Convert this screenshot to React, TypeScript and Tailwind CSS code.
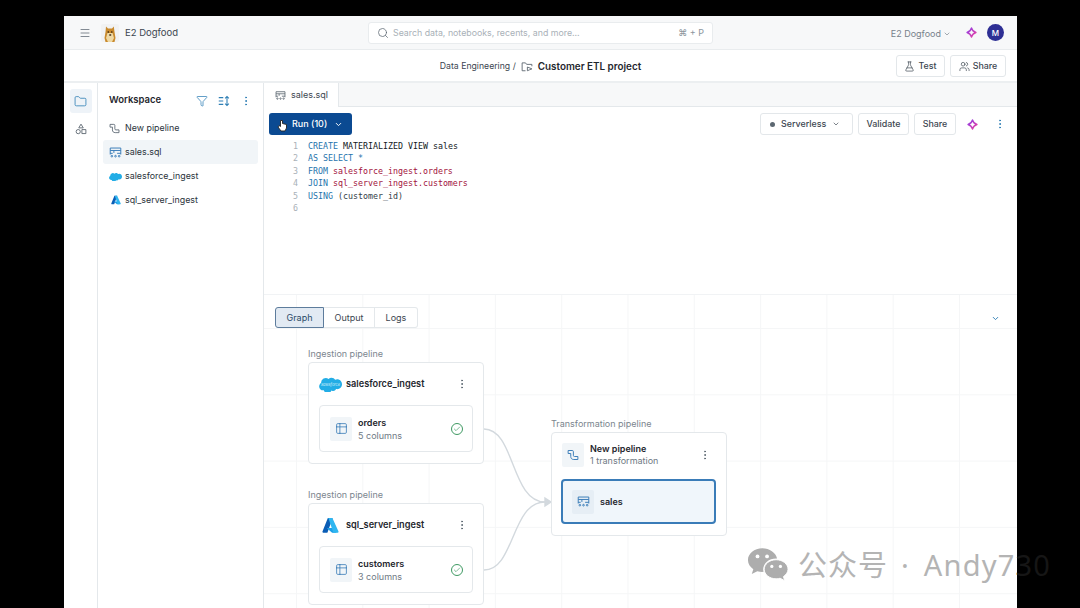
import { Check, ChevronDown, EllipsisVertical, Filter, Folder, Menu, Search, Table2, FlaskConical, Users } from "lucide-react";

const sans = "font-['Inter','Liberation_Sans',sans-serif]";

function Sparkle({ className }: { className?: string }) {
  return (
    <svg viewBox="0 0 16 16" className={className} fill="none">
      <defs>
        <linearGradient id="spark" x1="0" y1="0" x2="1" y2="1">
          <stop offset="0" stopColor="#8b3fe8" />
          <stop offset="1" stopColor="#ee3f9d" />
        </linearGradient>
      </defs>
      <path d="M8 1.500 C9 5 11 7 14.500 8 C11 9 9 11 8 14.500 C7 11 5 9 1.500 8 C5 7 7 5 8 1.500Z" stroke="url(#spark)" strokeWidth="2" strokeLinejoin="round" />
    </svg>
  );
}

function SqlIcon({ className }: { className?: string }) {
  return (
    <svg viewBox="0 0 16 16" className={className} fill="none" stroke="currentColor" strokeWidth="1.2">
      <path d="M1.500 10.500V2.500h13v8" />
      <path d="M1.500 5.500h13M6 5.500v3" />
      <path d="M1.500 9h3M10 9h4.500" />
      <circle cx="3.500" cy="12.500" r="1" />
      <circle cx="8" cy="12.500" r="1" />
      <circle cx="12.500" cy="12.500" r="1" />
    </svg>
  );
}

function PipelineIcon({ className }: { className?: string }) {
  return (
    <svg viewBox="0 0 16 16" className={className} fill="none" stroke="currentColor" strokeWidth="1.3" strokeLinejoin="round">
      <path d="M1.500 2h5.500c1 0 1.500.5 1.500 1.500v5c0 1 .5 1.500 1.500 1.500h4.500v4H9c-2.500 0-4-1.500-4-4V6H1.500Z" />
    </svg>
  );
}

function SortIcon({ className }: { className?: string }) {
  return (
    <svg viewBox="0 0 16 16" className={className} fill="none" stroke="currentColor" strokeWidth="1.4">
      <path d="M1 3.500h6M1 8h6M1 12.500h6" />
      <path d="M12 2v12M9.500 4.500 12 2l2.500 2.500M9.500 11.500 12 14l2.500-2.500" />
    </svg>
  );
}

function ShapesIcon({ className }: { className?: string }) {
  return (
    <svg viewBox="0 0 16 16" className={className} fill="none" stroke="currentColor" strokeWidth="1.2" strokeLinejoin="round">
      <path d="M8 1.500 11 6.500H5Z" />
      <circle cx="4.300" cy="11.500" r="2.800" />
      <rect x="9.200" y="8.800" width="5.300" height="5.300" />
    </svg>
  );
}

function SalesforceLogo({ className, label }: { className?: string; label?: boolean }) {
  return (
    <svg viewBox="0 0 48 32" className={className}>
      <path fill="#22ade6" d="M20 5.500a8.500 8.500 0 0 1 6.200-2.700c3.200 0 6 1.800 7.500 4.400a10.400 10.400 0 0 1 4.200-.9c5.600 0 10.100 4.500 10.100 10.200S43.500 26.700 37.900 26.700c-.7 0-1.400-.1-2-.2a7.500 7.500 0 0 1-9.900 3.100 8.600 8.600 0 0 1-16-.4 6.600 6.600 0 0 1-1.400.1C4 29.300.3 25.600.3 21c0-3.100 1.700-5.800 4.100-7.200A9.700 9.700 0 0 1 20 5.500Z" />
      {label && <text x="24" y="19.500" textAnchor="middle" fontSize="8" fill="#d7f1fb" fontStyle="italic" fontFamily="Inter, sans-serif">salesforce</text>}
    </svg>
  );
}

function AzureLogo({ className }: { className?: string }) {
  return (
    <svg viewBox="0 0 32 32" className={className}>
      <path fill="#0a5db5" d="M11 2h9L10.500 28.500a1.500 1.500 0 0 1-1.400 1H2.300a1.500 1.500 0 0 1-1.400-2Z" />
      <path fill="#1b9fe8" d="M24.500 20.500H10.300a.7.7 0 0 0-.5 1.200l9.200 7.800h8.300Z" />
      <path fill="#2fb6f0" d="M20 2.900A1.500 1.500 0 0 0 18.600 2h-7.700a1.500 1.500 0 0 1 1.400 1l8.700 25.500a1.500 1.500 0 0 1-1.400 1h10.100a1.500 1.500 0 0 0 1.400-2Z" />
    </svg>
  );
}

function DogLogo() {
  return (
    <svg viewBox="0 0 18 18" className="h-[18px] w-[18px]">
      <rect x="0" y="0" width="18" height="18" rx="2" fill="#f1f2f3" />
      <path d="M5 2.500 7 4.500h4l1.800-2 .700 5.500 1 6-1 4H4.500l-1-4 1-6Z" fill="#c98a2d" />
      <path d="M6.500 9h5l1.500 5-2 4H7l-2-4Z" fill="#efd9a5" />
      <circle cx="7.300" cy="8" r=".8" fill="#2c1c0c" />
      <circle cx="10.800" cy="8" r=".8" fill="#2c1c0c" />
      <ellipse cx="9.200" cy="11" rx="1.200" ry=".8" fill="#2c1c0c" />
    </svg>
  );
}

function Button({ children, className = "" }: { children: React.ReactNode; className?: string }) {
  return (
    <div className={`flex h-[22px] items-center justify-center rounded-[3px] border border-[#e3e7ea] bg-white text-[8.900px] font-medium text-[#3c4650] ${className}`}>
      {children}
    </div>
  );
}

const sidebarItems = [
  { name: "New pipeline", icon: <PipelineIcon className="h-[11px] w-[11px] text-[#5f6b76]" /> },
  { name: "sales.sql", icon: <SqlIcon className="h-[13px] w-[13px] text-[#3a7cb8]" />, active: true },
  { name: "salesforce_ingest", icon: <SalesforceLogo className="h-[9px] w-[13px]" /> },
  { name: "sql_server_ingest", icon: <AzureLogo className="ml-[2px] h-[10px] w-[10px]" /> },
];

const kw = "text-[#1f74ad]";
const str = "text-[#a1123c]";
const plain = "text-[#12171c]";

function CodeLines() {
  const rows = [
    <><span className={kw}>CREATE</span> <span className={plain}>MATERIALIZED VIEW sales</span></>,
    <><span className={kw}>AS SELECT *</span></>,
    <><span className={kw}>FROM</span> <span className={str}>salesforce_ingest.orders</span></>,
    <><span className={kw}>JOIN</span> <span className={str}>sql_server_ingest.customers</span></>,
    <><span className={kw}>USING</span> <span className="text-[#333e48]">(customer_id)</span></>,
    <></>,
  ];
  return (
    <div className="mt-[5px] font-['DejaVu_Sans_Mono',monospace] text-[8.300px] leading-[12.400px]">
      {rows.map((row, i) => (
        <div key={i} className="flex h-[12.400px] whitespace-pre">
          <span className="w-[37px] pr-[3px] text-right text-[#a9b1b8]">{i + 1}</span>
          <span className="ml-[7px]">{row}</span>
        </div>
      ))}
    </div>
  );
}

function TableRow({ name, cols }: { name: string; cols: string }) {
  return (
    <div className="mx-[10px] flex h-[47px] items-center rounded-[4px] border border-[#e4e8eb] bg-white px-[10px]">
      <div className="flex h-[24px] w-[22px] items-center justify-center rounded-[2px] bg-[#f1f5f8]">
        <Table2 className="h-[13px] w-[13px] text-[#3a7cb8]" strokeWidth={1.5} />
      </div>
      <div className="ml-[6px] flex-1">
        <div className="text-[9px] font-semibold leading-[13px] text-[#1f272e]">{name}</div>
        <div className="text-[9px] leading-[13px] text-[#6f7a84]">{cols}</div>
      </div>
      <div className="ml-[1px] mr-[-1px] flex h-[12px] w-[12px] items-center justify-center rounded-full border border-[#3f9a63]">
        <Check className="h-[8px] w-[8px] text-[#3f9a63]" strokeWidth={2} />
      </div>
    </div>
  );
}

function IngestNode({ top, name, logo, table, cols }: { top: number; name: string; logo: React.ReactNode; table: string; cols: string }) {
  return (
    <div className="absolute left-[44px]" style={{ top }}>
      <div className="mb-[2px] text-[9px] leading-[12px] text-[#7b858e]">Ingestion pipeline</div>
      <div className="h-[102px] w-[176px] rounded-[4px] border border-[#e4e8eb] bg-white">
        <div className="flex h-[42px] items-center pl-[10px] pr-[15px]">
          <div className="flex w-[27px] justify-start">{logo}</div>
          <div className="flex-1 text-[9.200px] font-semibold text-[#1f272e]">{name}</div>
          <EllipsisVertical className="h-[12px] w-[12px] text-[#5c6771]" />
        </div>
        <TableRow name={table} cols={cols} />
      </div>
    </div>
  );
}

export default function App() {
  return (
    <div className={`${sans} h-[608px] w-[1080px] overflow-hidden bg-black pl-[64px] pt-[16px]`}>
      <div className="relative flex h-[592px] w-[953px] flex-col overflow-hidden bg-white">
        {/* global bar */}
        <div className="flex h-[34px] shrink-0 items-center border-b border-[#e9ecee] bg-[#f7f8f9] pl-[15px] pr-[13px]">
          <Menu className="h-[12px] w-[12px] text-[#5c6771]" strokeWidth={1.5} />
          <div className="ml-[10px]"><DogLogo /></div>
          <span className="ml-[6px] pt-[2px] text-[9.500px] text-[#3c4650]">E2 Dogfood</span>
          <div className="ml-[190px] flex h-[22px] w-[345px] items-center rounded-[3px] border border-[#e9ecee] bg-white px-[8px]">
            <Search className="h-[12px] w-[12px] text-[#5c6771]" strokeWidth={1.5} />
            <span className="ml-[4px] flex-1 text-[8.800px] text-[#a9b1b8]">Search data, notebooks, recents, and more...</span>
            <span className="text-[9px] text-[#8c959d]">⌘ + P</span>
          </div>
          <div className="ml-auto flex items-center">
            <span className="pt-[2px] text-[9px] text-[#77818b]">E2 Dogfood</span>
            <ChevronDown className="ml-[2px] mt-[2px] h-[8px] w-[8px] text-[#77818b]" strokeWidth={2} />
            <Sparkle className="ml-[15px] h-[11px] w-[11px]" />
            <div className="ml-[10px] flex h-[17px] w-[17px] items-center justify-center rounded-full bg-[#2e2f94] text-[8px] font-medium text-white">M</div>
          </div>
        </div>

        {/* project bar */}
        <div className="relative flex h-[33px] shrink-0 items-center justify-center border-b-2 border-[#eceff1] pt-[2px]">
          <span className="text-[8.700px] text-[#3c4650]">Data Engineering /</span>
          <svg viewBox="0 0 16 16" className="ml-[5px] h-[12px] w-[12px] text-[#5c6771]" fill="none" stroke="currentColor" strokeWidth="1.2">
            <path d="M6 13H1.500V2.500h4.500l1.500 2h7V7" />
            <path d="M8.500 8v5l3-1.300 3-1.200Z" />
          </svg>
          <span className="ml-[5px] text-[9.900px] font-semibold text-[#1f272e]">Customer ETL project</span>
          <div className="absolute right-[11px] top-[5px] flex gap-[5px]">
            <Button className="w-[49px] gap-[3px]"><FlaskConical className="h-[11px] w-[11px]" strokeWidth={1.5} />Test</Button>
            <Button className="w-[56px] gap-[3px]"><Users className="h-[11px] w-[11px]" strokeWidth={1.5} />Share</Button>
          </div>
        </div>

        <div className="flex min-h-0 flex-1">
          {/* rail */}
          <div className="flex w-[34px] shrink-0 flex-col items-center border-r border-[#e4e8eb] pt-[6px]">
            <div className="flex h-[24px] w-[22px] items-center justify-center rounded-[3px] bg-[#eef3f8]">
              <Folder className="h-[13px] w-[13px] text-[#2f7fb5]" strokeWidth={1.5} />
            </div>
            <ShapesIcon className="mt-[10px] h-[12px] w-[12px] text-[#5c6771]" />
          </div>

          {/* workspace panel */}
          <div className="w-[166px] shrink-0 border-r border-[#e4e8eb] px-[5px] pt-[9px]">
            <div className="flex h-[17px] items-center pl-[6px] pr-[6px]">
              <span className="flex-1 text-[9.500px] font-semibold text-[#1f272e]">Workspace</span>
              <Filter className="h-[12px] w-[12px] text-[#2f7fb5]" strokeWidth={1.5} />
              <SortIcon className="ml-[10px] h-[12px] w-[12px] text-[#2f7fb5]" />
              <EllipsisVertical className="ml-[10px] h-[12px] w-[12px] text-[#2f7fb5]" strokeWidth={2} />
            </div>
            <div className="mt-[7px] flex flex-col">
              {sidebarItems.map((item) => (
                <div key={item.name} className={`flex h-[24px] items-center rounded-[3px] pl-[6px] ${item.active ? "bg-[#f1f5f8]" : ""}`}>
                  <div className="flex w-[16px] justify-start">{item.icon}</div>
                  <span className="text-[8.900px] text-[#2b343c]">{item.name}</span>
                </div>
              ))}
            </div>
          </div>

          {/* main */}
          <div className="flex min-w-0 flex-1 flex-col">
            <div className="flex h-[24px] shrink-0 border-b border-[#e4e8eb] bg-[#f7f8f9]">
              <div className="-mb-px flex w-[75px] items-center border-r border-[#e4e8eb] bg-white pl-[11px] text-[9px] text-[#3c4650]">
                <SqlIcon className="mr-[5px] h-[11px] w-[11px] text-[#5c6771]" />
                sales.sql
              </div>
            </div>

            <div className="h-[188px] shrink-0 border-b border-[#f1f3f5]">
              <div className="flex h-[28px] items-start justify-between pl-[5px] pr-[11px] pt-[6px]">
                <div className="relative flex h-[22px] w-[83px] items-center rounded-[3px] bg-[#0b4a92] pl-[23px] text-[9px] font-medium text-white">
                  Run (10)
                  <ChevronDown className="ml-[7px] h-[9px] w-[9px]" strokeWidth={2.500} />
                  {/* cursor */}
                  <svg viewBox="0 0 10 13" className="absolute left-[8px] top-[6px] h-[13px] w-[10px]">
                    <path d="M3.500 1.500v6L2 6.500 1 8l3 4h4l1.500-3V5.500L5.500 4.500v-3Z" fill="#fff" stroke="#222" strokeWidth=".9" />
                  </svg>
                </div>
                <div className="flex items-center">
                  <Button className="w-[93px] justify-start pl-[9px]">
                    <span className="mr-[6px] h-[5px] w-[5px] rounded-full bg-[#5c6771]" />Serverless
                    <ChevronDown className="ml-[6px] h-[8px] w-[8px]" strokeWidth={2} />
                  </Button>
                  <Button className="ml-[5px] w-[51px]">Validate</Button>
                  <Button className="ml-[5px] w-[42px]">Share</Button>
                  <Sparkle className="ml-[11px] h-[11px] w-[11px]" />
                  <EllipsisVertical className="ml-[16px] h-[12px] w-[12px] text-[#2f7fb5]" strokeWidth={2} />
                </div>
              </div>
              <CodeLines />
            </div>

            {/* graph canvas */}
            <div className="relative min-h-0 flex-1 bg-white bg-[linear-gradient(#f5f6f7_1px,transparent_1px),linear-gradient(90deg,#f5f6f7_1px,transparent_1px)] bg-[size:66.300px_66.300px] bg-[position:32px_33px]">
              <div className="absolute left-[11px] top-[12px] flex h-[21px] text-[9px] text-[#3c4650]">
                <div className="flex w-[49px] items-center justify-center rounded-l-[3px] border border-[#5d7c9c] bg-[#e2eaf3] text-[#2b4a68]">Graph</div>
                <div className="flex w-[51px] items-center justify-center border-y border-r border-[#e4e8eb] bg-white">Output</div>
                <div className="flex w-[43px] items-center justify-center rounded-r-[3px] border-y border-r border-[#e4e8eb] bg-white">Logs</div>
              </div>
              <ChevronDown className="absolute right-[17px] top-[19px] h-[9px] w-[9px] text-[#2f7fb5]" strokeWidth={2.500} />

              <svg className="absolute left-[215px] top-[130px] h-[150px] w-[80px]" viewBox="0 0 80 150" fill="none" stroke="#d3d9de" strokeWidth="1.400">
                <path d="M5 4C36 4 32 77 66 77" />
                <path d="M5 145C36 145 32 77 66 77" />
                <path d="M66 73l6 4-6 4Z" fill="#d3d9de" />
              </svg>

              <IngestNode top={53} name="salesforce_ingest" table="orders" cols="5 columns" logo={<SalesforceLogo label className="h-[16px] w-[23px]" />} />
              <IngestNode top={194} name="sql_server_ingest" table="customers" cols="3 columns" logo={<AzureLogo className="ml-[3px] h-[17px] w-[17px]" />} />

              <div className="absolute left-[287px] top-[123px]">
                <div className="mb-[2px] text-[9px] leading-[12px] text-[#7b858e]">Transformation pipeline</div>
                <div className="h-[104px] w-[176px] rounded-[4px] border border-[#e4e8eb] bg-white">
                  <div className="flex h-[44px] items-center pl-[10px] pr-[15px]">
                    <div className="flex h-[24px] w-[22px] items-center justify-center rounded-[2px] bg-[#f1f5f8]">
                      <PipelineIcon className="h-[12px] w-[12px] text-[#3a7cb8]" />
                    </div>
                    <div className="ml-[6px] flex-1">
                      <div className="text-[9px] font-semibold leading-[12px] text-[#1f272e]">New pipeline</div>
                      <div className="text-[9px] leading-[12px] text-[#6f7a84]">1 transformation</div>
                    </div>
                    <EllipsisVertical className="h-[12px] w-[12px] text-[#5c6771]" />
                  </div>
                  <div className="ml-[9px] mt-[2px] flex h-[45px] w-[155px] items-center rounded-[4px] border-2 border-[#3a7cb8] bg-[#f0f6fb] pl-[9px]">
                    <div className="flex h-[24px] w-[22px] items-center justify-center rounded-[2px] bg-[#e6eef5]">
                      <SqlIcon className="h-[13px] w-[13px] text-[#3a7cb8]" />
                    </div>
                    <span className="ml-[6px] text-[9px] font-semibold text-[#1f272e]">sales</span>
                  </div>
                </div>
              </div>
            </div>
          </div>
        </div>
      </div>

      {/* watermark */}
      <div className="absolute left-[747px] top-[547px] flex items-center text-[#b4b4b4]">
        <svg viewBox="0 0 44 36" className="h-[35px] w-[42px]" fill="#adadad">
          <path d="M16 1C7.700 1 1 6.500 1 13.300c0 3.900 2.200 7.300 5.600 9.600L5 28l5.800-3a18 18 0 0 0 5.200.8c.5 0 1 0 1.400-.1A11 11 0 0 1 17 23c0-6.300 6-11.400 13.400-11.400h1.100C30 5.600 23.700 1 16 1Z" />
          <path d="M43 23c0-5.500-5.600-10-12.500-10S18 17.500 18 23s5.600 10 12.500 10c1.500 0 2.900-.2 4.200-.6l4.800 2.600-1.300-4.300C41 28.800 43 26 43 23Z" stroke="#fff" strokeWidth="1" />
          <circle cx="11" cy="9.500" r="2" fill="#fff" />
          <circle cx="21" cy="9.500" r="2" fill="#fff" />
          <circle cx="26" cy="20" r="1.700" fill="#fff" />
          <circle cx="35" cy="20" r="1.700" fill="#fff" />
        </svg>
        <div className="ml-[9px] flex whitespace-nowrap font-['Noto_Sans','Noto_Sans_CJK_SC',sans-serif] text-[29px] leading-none">
          <span className="tracking-[1px]">公众号</span>
          <span className="ml-[13px] tracking-[1px]">·</span>
          <span className="ml-[14px] tracking-[1.200px]">Andy7<span className="text-[#161616]">30</span></span>
        </div>
      </div>
    </div>
  );
}
